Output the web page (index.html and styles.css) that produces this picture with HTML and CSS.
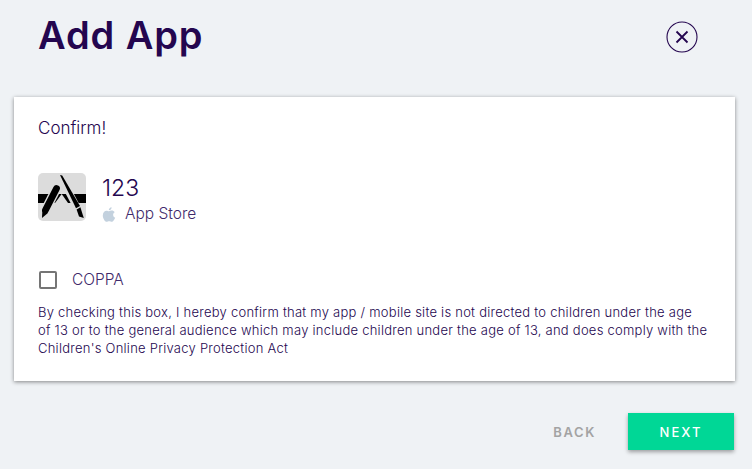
FILE: index.html
```html
<!DOCTYPE html>
<html lang="en">
<head>
    <meta charset="UTF-8">
    <title>Add App</title>
    <link rel="stylesheet" href="styles.css">
</head>
<body>
    <div class="header">
        <h1 class="title">Add App</h1>
        <button class="close" aria-label="Close">
            <svg width="32" height="32" viewBox="0 0 32 32">
                <circle cx="16" cy="16" r="15" fill="none" stroke="#24064f" stroke-width="1.1"/>
                <path d="M10.5 10.5 L21.5 21.5 M21.5 10.5 L10.5 21.5" stroke="#24064f" stroke-width="1.8" fill="none"/>
            </svg>
        </button>
    </div>
    <div class="card">
        <div class="confirm">Confirm!</div>
        <div class="app">
            <svg class="app-icon" width="48" height="48" viewBox="0 0 48 48">
                <rect width="48" height="48" rx="5" fill="#dcdcdc"/>
                <path d="M0 21 H48 V30 H0 Z" fill="#000"/>
                <path d="M17 30 L23.7 21 L30 30 Z" fill="#dcdcdc"/>
                <path d="M18.5 15.5 L7.5 37" stroke="#dcdcdc" stroke-width="9.4" fill="none"/>
                <path d="M18.5 15.5 L7.5 37" stroke="#000" stroke-width="6.8" stroke-linecap="round" fill="none"/>
                <path d="M4.4 36.8 L10.2 39.8 L4 45 Z" fill="#000"/>
                <path d="M23.5 5 L39.5 35.5" stroke="#dcdcdc" stroke-width="7" fill="none"/>
                <path d="M22 2 L24.2 2.5 L42 33 L38 35.3 Z" fill="#000"/>
                <path d="M38.6 36.4 L42.4 34.2 L45.8 45 L41 43.5 Z" fill="#000"/>
            </svg>
            <div class="app-info">
                <div class="app-name">123</div>
                <div class="app-store">
                    <svg width="14" height="15" viewBox="0 0 14 15">
                        <path d="M9.6 0.2 C9.7 1.9 8.3 3.4 6.8 3.3 C6.7 1.8 8.1 0.3 9.6 0.2 Z M7 4.2 C7.8 4.2 8.6 3.6 9.8 3.6 C10.9 3.6 12 4.2 12.7 5.2 C10.4 6.5 10.8 9.7 13.2 10.7 C12.6 12.2 11.2 14.8 9.8 14.8 C8.8 14.8 8.4 14.2 7.2 14.2 C6 14.2 5.5 14.8 4.6 14.8 C3 14.8 0.8 11.4 0.8 8.4 C0.8 5.4 2.7 3.7 4.5 3.7 C5.6 3.7 6.3 4.2 7 4.2 Z" fill="#c3d1de"/>
                    </svg>
                    <span>App Store</span>
                </div>
            </div>
        </div>
        <label class="coppa">
            <span class="checkbox"></span>
            <span>COPPA</span>
        </label>
        <p class="legal">By checking this box, I hereby confirm that my app / mobile site is not directed to children under the age<br>of 13 or to the general audience which may include children under the age of 13, and does comply with the<br>Children's Online Privacy Protection Act</p>
    </div>
    <div class="actions">
        <button class="btn-back">BACK</button>
        <button class="btn-next">NEXT</button>
    </div>
</body>
</html>
```

FILE: styles.css
```css
html, body {
    height: 100%;
}
body {
    margin: 0;
    background-color: #eff2f5;
    color: #24064f;
    font-family: 'Inter', sans-serif;
    font-weight: 300;
    overflow: hidden;
}
.header {
    display: flex;
    justify-content: space-between;
    align-items: flex-start;
    height: 97px;
    padding: 0 54px 0 38px;
    box-sizing: border-box;
}
.title {
    margin: 12px 0 0;
    font-size: 38px;
    line-height: 46px;
    font-weight: 600;
    letter-spacing: 0.9px;
    color: #24064f;
}
.close {
    background: none;
    border: none;
    padding: 0;
    margin-top: 21px;
    width: 32px;
    height: 32px;
    cursor: pointer;
}
.card {
    width: 721px;
    height: 284px;
    margin-left: 14px;
    padding: 21px 24px 0;
    box-sizing: border-box;
    background-color: #fff;
    box-shadow: 0 1px 4px rgba(0, 0, 0, 0.45);
}
.confirm {
    font-size: 17px;
    line-height: 20px;
}
.app {
    display: flex;
    margin-top: 35px;
    gap: 16px;
}
.app-icon {
    flex: none;
}
.app-name {
    margin-top: 1px;
    font-size: 23px;
    line-height: 28px;
}
.app-store {
    display: flex;
    align-items: center;
    gap: 9px;
    margin-top: 3px;
    font-size: 15.5px;
    line-height: 18px;
    color: #3f2a6b;
}
.coppa {
    display: flex;
    align-items: center;
    gap: 15px;
    margin-top: 47px;
    margin-left: 1px;
    font-size: 15.5px;
    line-height: 20px;
    color: #3f2a6b;
}
.checkbox {
    width: 14px;
    height: 14px;
    border: 2px solid #757575;
    border-radius: 2px;
}
.legal {
    margin: 13px 0 0;
    font-size: 13px;
    line-height: 18px;
    letter-spacing: 0.25px;
    white-space: nowrap;
    color: #24064f;
}
.actions {
    display: flex;
    justify-content: flex-end;
    align-items: center;
    gap: 32px;
    margin-top: 32px;
    padding-right: 18px;
}
.actions button {
    border: none;
    font-family: 'Inter', sans-serif;
    font-size: 13px;
    font-weight: 500;
    letter-spacing: 2px;
    cursor: pointer;
}
.actions .btn-back {
    background: none;
    color: #a3a3a3;
    padding: 0;
    font-weight: 600;
    letter-spacing: 1.6px;
}
.btn-next {
    width: 106px;
    height: 37px;
    background-color: #00d796;
    color: #fff;
    box-shadow: 0 2px 4px rgba(0, 0, 0, 0.35);
}
```
